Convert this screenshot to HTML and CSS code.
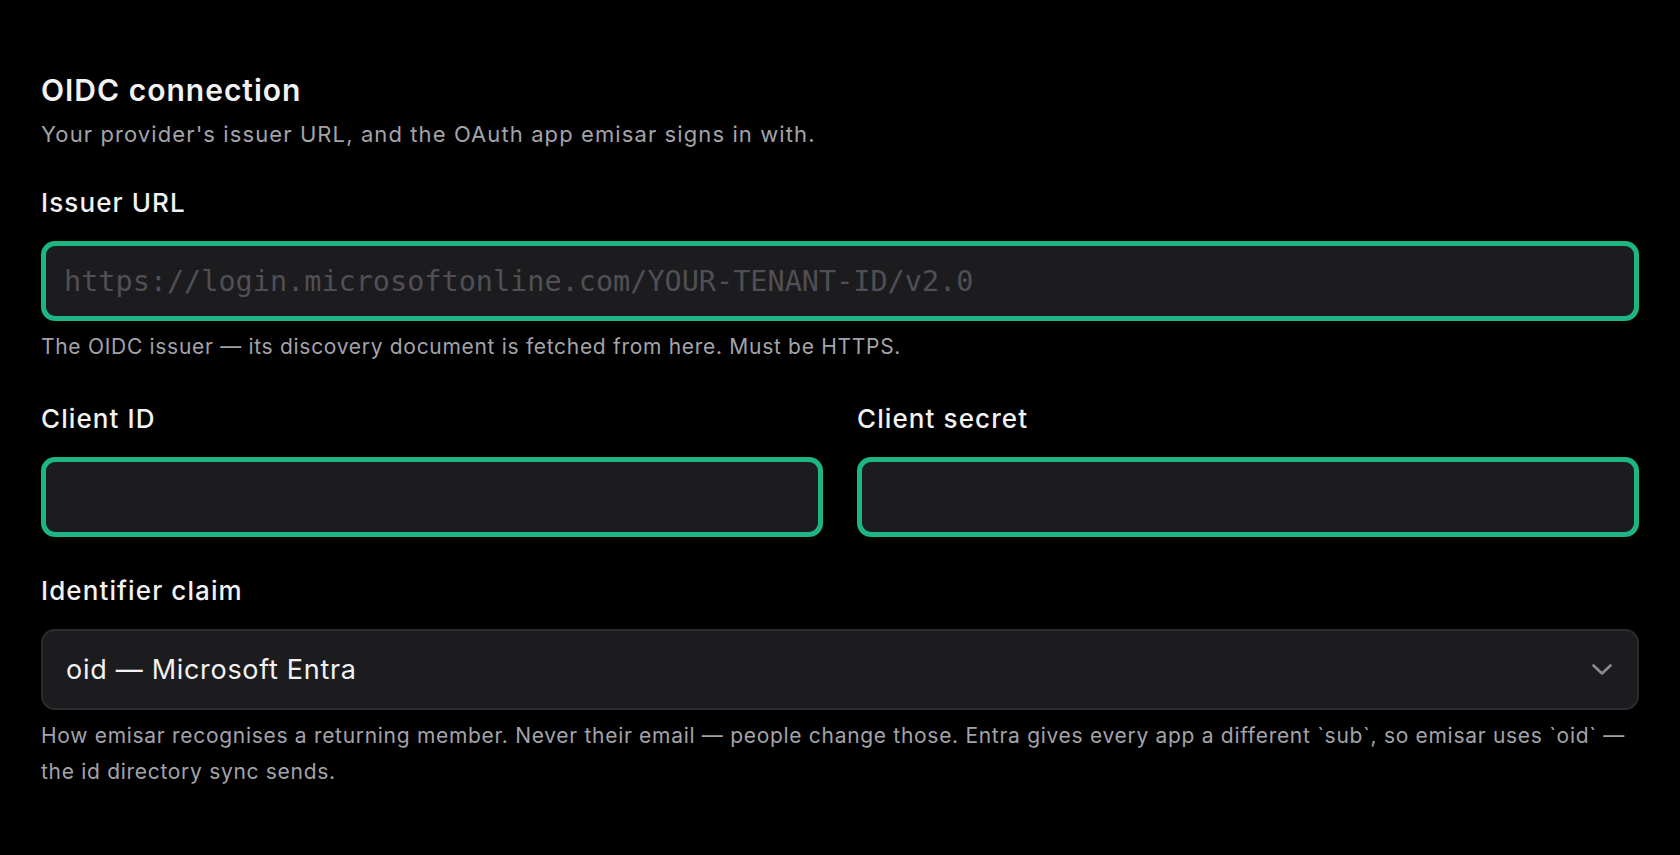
FILE: index.html
```html
<!DOCTYPE html>
<html lang="en">
<head>
<meta charset="UTF-8" />
<meta name="viewport" content="width=device-width, initial-scale=1.0" />
<title>OIDC connection</title>
<link rel="stylesheet" href="styles.css">
</head>
<body>

<section class="panel">
  <h2>OIDC connection</h2>
  <p class="intro">Your provider's issuer URL, and the OAuth app emisar signs in with.</p>

  <div class="fields">
    <div class="field">
      <label for="issuer">Issuer URL</label>
      <input id="issuer" class="input mono invalid" type="url" placeholder="https://login.microsoftonline.com/YOUR-TENANT-ID/v2.0">
      <p class="help">The OIDC issuer — its discovery document is fetched from here. Must be HTTPS.</p>
    </div>

    <div class="row">
      <div class="field">
        <label for="client-id">Client ID</label>
        <input id="client-id" class="input invalid" type="text">
      </div>
      <div class="field">
        <label for="client-secret">Client secret</label>
        <input id="client-secret" class="input invalid" type="password">
      </div>
    </div>

    <div class="field">
      <label for="claim">Identifier claim</label>
      <div class="select-wrap">
        <select id="claim" class="select">
          <option value="oid">oid — Microsoft Entra</option>
          <option value="sub">sub — standard subject</option>
        </select>
        <svg class="chevron" width="20" height="11" viewBox="0 0 20 11" fill="none">
          <path d="M1.5 1.5 L10 9.5 L18.5 1.5" stroke="currentColor" stroke-width="2.6" stroke-linecap="round" stroke-linejoin="round"/>
        </svg>
      </div>
      <p class="help">How emisar recognises a returning member. Never their email — people change those. Entra gives every app a different `sub`, so emisar uses `oid` — the id directory sync sends.</p>
    </div>
  </div>
</section>

</body>
</html>
```

FILE: styles.css
```css
body {
  margin: 0;
  background-color: #000;
  color: #f2f2f3;
  font-family: Inter, "Noto Sans", sans-serif;
}
.panel {
  padding: 72px 41px 60px;
}
h2 {
  margin: 0;
  font-size: 30px;
  line-height: 36px;
  font-weight: 600;
  letter-spacing: 1px;
}
.intro {
  margin: 10px 0 0;
  font-size: 22px;
  line-height: 32px;
  letter-spacing: 1.1px;
  color: #a3a3aa;
}
.fields {
  display: flex;
  flex-direction: column;
  gap: 38px;
  margin-top: 37px;
}
.row {
  display: grid;
  grid-template-columns: 1fr 1fr;
  gap: 34px;
}
.field {
  display: flex;
  flex-direction: column;
}
.field label {
  font-size: 26px;
  line-height: 32px;
  font-weight: 500;
  letter-spacing: 1.1px;
  color: #f2f2f3;
  margin-bottom: 22px;
}
.input {
  box-sizing: border-box;
  width: 100%;
  height: 80px;
  padding: 0 18px;
  background-color: #1c1c1f;
  border: 2px solid #2c2c30;
  border-radius: 14px;
  color: #f2f2f3;
  font-family: Inter, sans-serif;
  font-size: 25px;
  outline: none;
}
.input.invalid {
  border: 5px solid #1db584;
}
.mono {
  font-family: "DejaVu Sans Mono", "Liberation Mono", monospace;
  font-size: 28.5px;
}
.input::placeholder {
  color: #4f4f55;
}
.help {
  margin: 8px 0 0;
  font-size: 21px;
  line-height: 36px;
  letter-spacing: 0.7px;
  color: #a3a3aa;
}
.select-wrap {
  position: relative;
}
.select {
  appearance: none;
  box-sizing: border-box;
  width: 100%;
  height: 81px;
  padding: 0 70px 0 23px;
  background-color: #1c1c1f;
  border: 2px solid #2c2c30;
  border-radius: 14px;
  color: #f2f2f3;
  font-family: Inter, sans-serif;
  font-size: 27px;
  letter-spacing: 0.7px;
  outline: none;
}
.chevron {
  position: absolute;
  right: 27px;
  top: 35px;
  color: #8b8b92;
  pointer-events: none;
}
```
